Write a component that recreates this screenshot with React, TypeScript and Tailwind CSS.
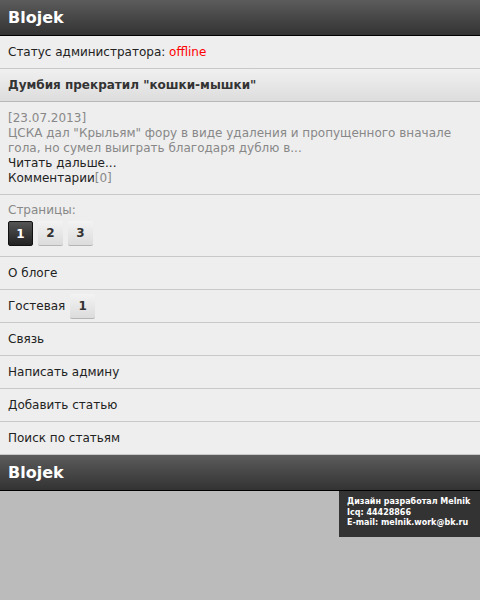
const menu = ["О блоге", "Гостевая", "Связь", "Написать админу", "Добавить статью", "Поиск по статьям"];

function Bar() {
  return (
    <div className="h-[36px] border-b border-black bg-gradient-to-b from-[#5c5c5c] to-[#333333] flex items-center px-2">
      <span className="text-white font-bold text-[16px]">Blojek</span>
    </div>
  );
}

function PageBtn({ n, active }: { n: number; active?: boolean }) {
  return (
    <div
      className={`w-[25px] h-[25px] flex items-center justify-center text-[12px] font-bold rounded-[2px] ${
        active
          ? "bg-gradient-to-b from-[#555] to-[#222] text-white border border-[#111]"
          : "bg-gradient-to-b from-[#f3f3f3] to-[#dcdcdc] text-[#333] border-b border-[#b5b5b5]"
      }`}
    >
      {n}
    </div>
  );
}

export default function App() {
  return (
    <div className="min-h-[600px] bg-[#bbbbbb] text-[12px] text-[#333]" style={{ fontFamily: '"DejaVu Sans", sans-serif' }}>
      <Bar />

      <div className="h-[33px] bg-[#eeeeee] border-b border-[#c8c8c8] flex items-center px-2 text-[#222]">
        Статус администратора:&nbsp;<span className="text-[#ff0000]">offline</span>
      </div>

      <div className="h-[33px] bg-gradient-to-b from-[#f0f0f0] to-[#dddddd] border-b border-[#b8b8b8] flex items-center px-2 font-bold text-[#333]">
        Думбия прекратил "кошки-мышки"
      </div>

      <div className="bg-[#eeeeee] border-b border-[#c8c8c8] px-2 pt-[9px] pb-[8px] leading-[15px]">
        <div className="text-[#888]">[23.07.2013]</div>
        <div className="text-[#888]">ЦСКА дал "Крыльям" фору в виде удаления и пропущенного вначале гола, но сумел выиграть благодаря дублю в...</div>
        <div className="text-[#222]">Читать дальше...</div>
        <div className="text-[#222]">
          Комментарии<span className="text-[#888]">[0]</span>
        </div>
      </div>

      <div className="bg-[#eeeeee] border-b border-[#c8c8c8] px-2 pt-[8px] pb-[10px]">
        <div className="text-[#888] leading-[15px]">Страницы:</div>
        <div className="flex gap-[5px] mt-[3px]">
          <PageBtn n={1} active />
          <PageBtn n={2} />
          <PageBtn n={3} />
        </div>
      </div>

      {menu.map((m) => (
        <div key={m} className="h-[33px] bg-[#eeeeee] border-b border-[#c8c8c8] flex items-center px-2 text-[#222] gap-[5px]">
          {m}
          {m === "Гостевая" && <PageBtn n={1} />}
        </div>
      ))}

      <Bar />

      <div className="flex justify-end">
        <div className="w-[141px] bg-[#333333] text-white font-bold text-[8px] leading-[10.5px] px-2 pt-[6px] pb-[8px] whitespace-nowrap">
          <div>Дизайн разработал Melnik</div>
          <div>Icq: 44428866</div>
          <div>E-mail: melnik.work@bk.ru</div>
        </div>
      </div>
    </div>
  );
}
